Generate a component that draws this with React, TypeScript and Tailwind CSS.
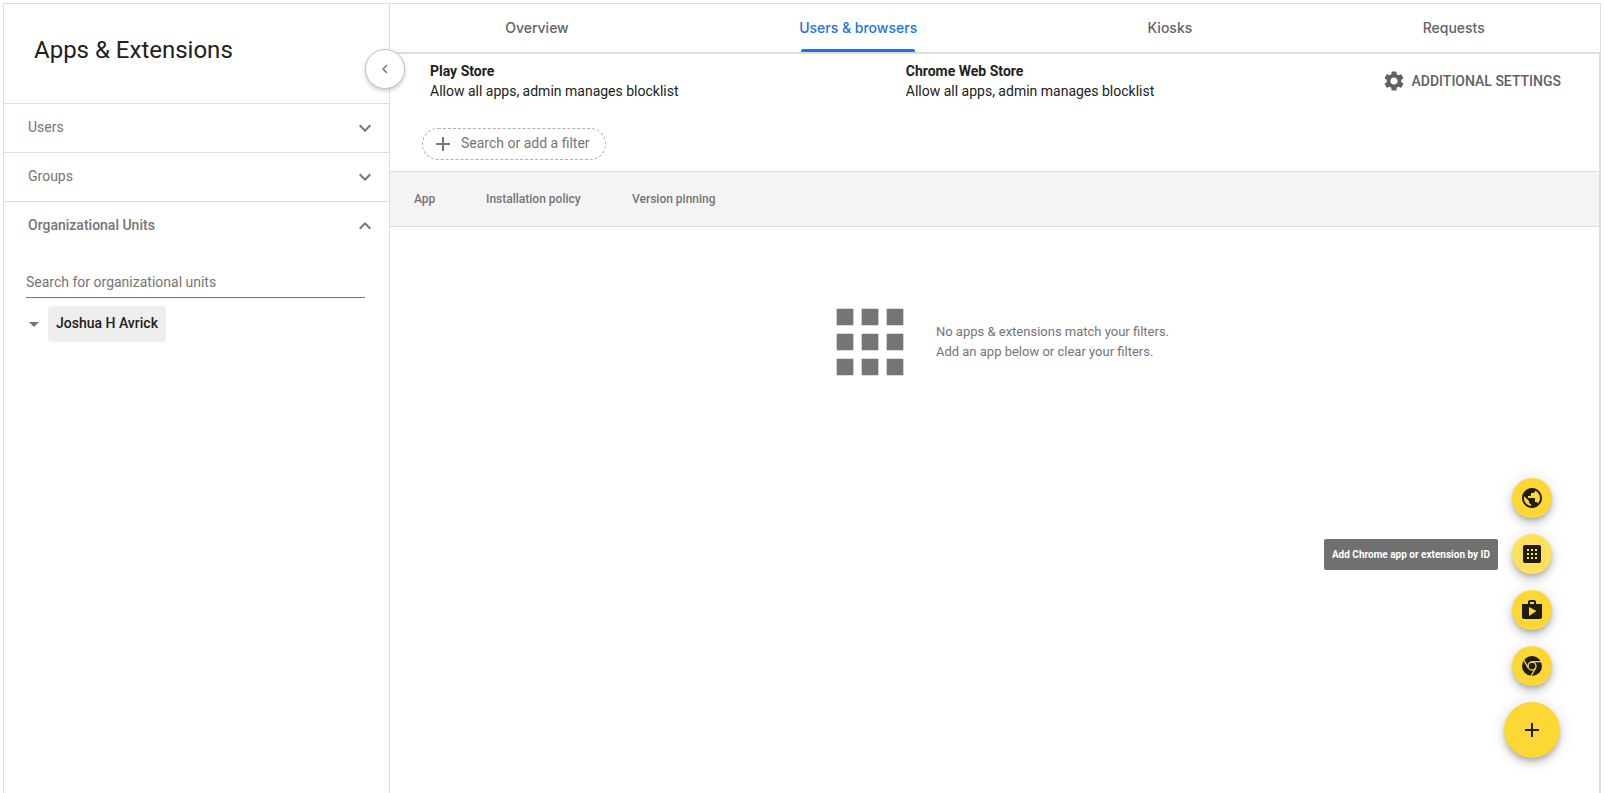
import type { ReactNode } from 'react';
import {
  MdAdd,
  MdApps,
  MdArrowDropDown,
  MdChevronLeft,
  MdExpandLess,
  MdExpandMore,
  MdPublic,
  MdSettings,
} from 'react-icons/md';

const tabs = ['Overview', 'Users & browsers', 'Kiosks', 'Requests'];
const activeTab = 'Users & browsers';

const stores = [
  { name: 'Play Store', policy: 'Allow all apps, admin manages blocklist' },
  { name: 'Chrome Web Store', policy: 'Allow all apps, admin manages blocklist' },
];

function GridAppIcon() {
  const cells = [7, 11, 15];
  return (
    <svg viewBox="0 0 24 24" className="size-6" aria-hidden="true">
      <rect x="3" y="3" width="18" height="18" rx="2" fill="currentColor" />
      {cells.map((y) =>
        cells.map((x) => (
          <rect key={`${x}-${y}`} x={x} y={y} width="2" height="2" fill="#fde05c" />
        )),
      )}
    </svg>
  );
}

function ShopIcon() {
  return (
    <svg viewBox="0 0 24 24" className="size-6" fill="currentColor" aria-hidden="true">
      <path d="M16 6V4c0-1.11-.89-2-2-2h-4c-1.11 0-2 .89-2 2v2H2v13c0 1.11.89 2 2 2h16c1.11 0 2-.89 2-2V6h-6zm-6-2h4v2h-4V4zM9 18V9l7.5 4L9 18z" />
    </svg>
  );
}

function ChromeIcon() {
  return (
    <svg viewBox="0 0 24 24" className="size-6" aria-hidden="true">
      <circle cx="12" cy="12" r="10" fill="currentColor" />
      <g fill="none" stroke="#fdd835" strokeWidth="1.3">
        <circle cx="12" cy="12" r="4" />
        <path d="M12 7.7H21.6" />
        <path d="M8.35 14.05L3.7 6" />
        <path d="M15.6 14.05L10.9 22.2" />
      </g>
    </svg>
  );
}

function SmallFab({ label, light, children }: { label: string; light?: boolean; children: ReactNode }) {
  return (
    <button
      type="button"
      aria-label={label}
      className={`flex size-10 items-center justify-center rounded-full text-[#211d0c] shadow-[0_3px_5px_-1px_rgba(0,0,0,0.2),0_6px_10px_0_rgba(0,0,0,0.14),0_1px_18px_0_rgba(0,0,0,0.12)] ${
        light ? 'bg-[#fde05c]' : 'bg-[#fdd835]'
      }`}
    >
      {children}
    </button>
  );
}

function SidebarSection({ title, open }: { title: string; open?: boolean }) {
  return (
    <button
      type="button"
      aria-expanded={!!open}
      className={`flex h-12 w-full items-center justify-between pr-3 pl-6 text-sm text-[#757575] ${
        open ? 'font-medium' : ''
      }`}
    >
      <span className="pb-0.5">{title}</span>
      {open ? <MdExpandLess className="size-6" /> : <MdExpandMore className="size-6" />}
    </button>
  );
}

function Sidebar() {
  return (
    <aside className="relative w-[386px] shrink-0 border-r border-[#dedede]">
      <h1 className="flex h-[99px] items-center px-[30px] pb-2 text-2xl text-[#212121]">
        Apps &amp; Extensions
      </h1>
      <div className="border-t border-[#dedede]">
        <SidebarSection title="Users" />
      </div>
      <div className="border-t border-[#dedede]">
        <SidebarSection title="Groups" />
      </div>
      <div className="border-t border-[#dedede]">
        <SidebarSection title="Organizational Units" open />
        <div className="pt-4 pr-6 pl-[22px]">
          <input
            type="text"
            aria-label="Search for organizational units"
            placeholder="Search for organizational units"
            className="block h-8 w-full border-b border-[#757575] bg-transparent text-sm text-[#212121] outline-none placeholder:text-[#757575]"
          />
          <div className="flex items-center pt-2">
            <button type="button" aria-label="Collapse unit" className="-ml-1 flex size-6 text-[#757575]">
              <MdArrowDropDown className="size-6" />
            </button>
            <button
              type="button"
              className="ml-0.5 h-9 rounded-sm bg-[#eeeeee] px-2 pb-0.5 text-sm font-medium text-[#212121]"
            >
              Joshua H Avrick
            </button>
          </div>
        </div>
      </div>
      <button
        type="button"
        aria-label="Collapse sidebar"
        className="absolute top-[45px] -right-4 flex size-10 items-center justify-center rounded-full border border-[#c0c0c0] bg-white text-[#757575] shadow-[0_2px_4px_rgba(0,0,0,0.2)]"
      >
        <MdChevronLeft className="size-[18px]" />
      </button>
    </aside>
  );
}

function TabBar() {
  return (
    <nav className="flex h-[50px] border-r border-b-2 border-[#dedede] font-['Inter',sans-serif] text-sm font-medium">
      {tabs.map((tab) => {
        const active = tab === activeTab;
        return (
          <a
            key={tab}
            href="#"
            aria-current={active ? 'page' : undefined}
            className={`flex flex-auto justify-center ${active ? 'text-[#1a73e8]' : 'text-[#5f6368]'}`}
          >
            <span className="relative flex h-full items-center">
              {tab}
              {active && <span className="absolute inset-x-0.5 bottom-0 h-[3px] rounded-t-xs bg-[#1a73e8]" />}
            </span>
          </a>
        );
      })}
    </nav>
  );
}

function EmptyState() {
  return (
    <div className="flex items-center justify-center gap-4 pt-[65px] text-[13px] leading-5 text-[#757575]">
      <MdApps className="size-[100px]" />
      <p>
        No apps &amp; extensions match your filters.
        <br />
        Add an app below or clear your filters.
      </p>
    </div>
  );
}

function AddMenu() {
  return (
    <div className="fixed right-11 bottom-[35px] flex flex-col items-center gap-4">
      <SmallFab label="Add by URL">
        <MdPublic className="size-6" />
      </SmallFab>
      <div className="relative">
        <SmallFab label="Add Chrome app or extension by ID" light>
          <GridAppIcon />
        </SmallFab>
        <div
          role="tooltip"
          className="absolute top-[5px] right-[54px] rounded-xs bg-[#707070] px-2 py-2 text-[10px] leading-[15px] font-bold whitespace-nowrap text-white"
        >
          Add Chrome app or extension by ID
        </div>
      </div>
      <SmallFab label="Add from Google Play">
        <ShopIcon />
      </SmallFab>
      <SmallFab label="Add from Chrome Web Store">
        <ChromeIcon />
      </SmallFab>
      <button
        type="button"
        aria-label="Add"
        className="flex size-14 items-center justify-center rounded-full bg-[#fdd835] text-[#211d0c] shadow-[0_3px_5px_-1px_rgba(0,0,0,0.2),0_6px_10px_0_rgba(0,0,0,0.14),0_1px_18px_0_rgba(0,0,0,0.12)]"
      >
        <MdAdd className="size-6" />
      </button>
    </div>
  );
}

export default function App() {
  return (
    <div className="flex min-h-screen bg-white px-[3px] pt-[3px] font-['Roboto',sans-serif]">
      <div className="flex flex-1 border-t border-l border-[#dedede]">
        <Sidebar />
        <main className="flex min-w-0 flex-1 flex-col">
          <TabBar />
          <section className="flex-1 border-r-2 border-[#dedede]">
            <div className="flex items-center pt-[7px] pr-[38px] pl-10 text-sm leading-5 text-[#212121]">
              {stores.map((store) => (
                <div key={store.name} className="w-[42.3%]">
                  <h2 className="font-bold">{store.name}</h2>
                  <p>{store.policy}</p>
                </div>
              ))}
              <button
                type="button"
                className="ml-auto flex shrink-0 items-center gap-1.5 font-medium whitespace-nowrap text-[#616161]"
              >
                <MdSettings className="size-6" />
                ADDITIONAL SETTINGS
              </button>
            </div>
            <div className="px-8 pt-[27px] pb-[11px]">
              <button
                type="button"
                className="flex h-8 items-center gap-1.5 rounded-full border border-dashed border-[#b0b0b0] pr-[15px] pl-2 text-sm text-[#757575]"
              >
                <MdAdd className="size-6" />
                <span className="pb-0.5">Search or add a filter</span>
              </button>
            </div>
            <table className="w-full border-y border-[#dedede] bg-[#f4f4f4] text-left text-xs text-[#757575]">
              <thead>
                <tr className="h-[55px]">
                  <th className="w-[96px] pl-6 font-medium">App</th>
                  <th className="w-[146px] font-medium">Installation policy</th>
                  <th className="font-medium">Version pinning</th>
                </tr>
              </thead>
            </table>
            <EmptyState />
          </section>
        </main>
      </div>
      <AddMenu />
    </div>
  );
}
